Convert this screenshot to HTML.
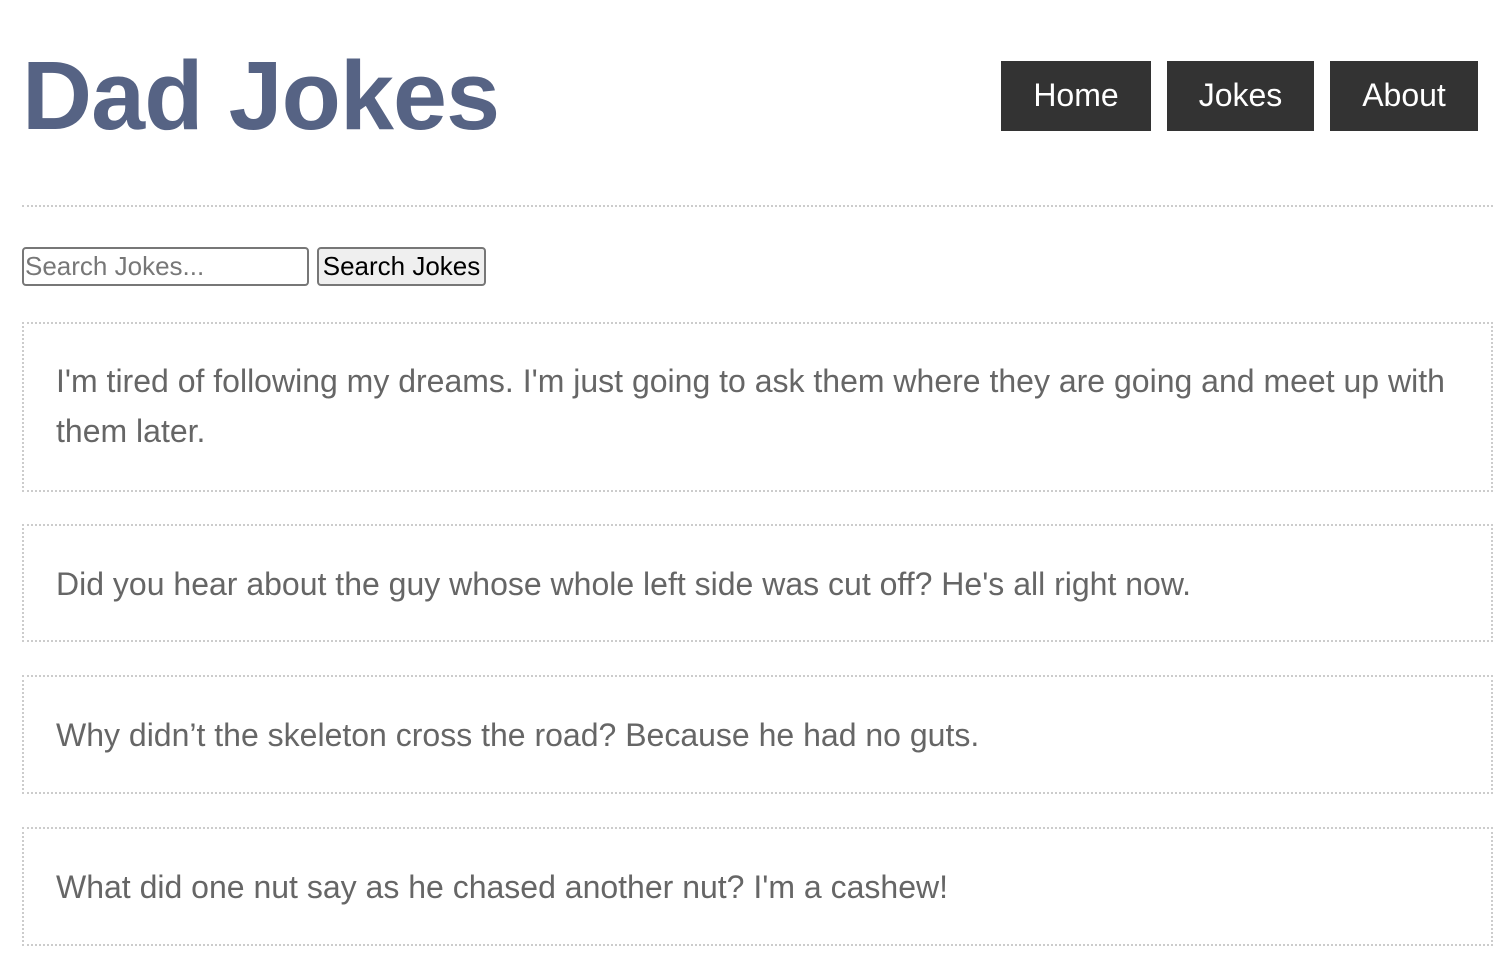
<!DOCTYPE html>
<html><head><style>
body{margin:0;background:#fff;font-family:"Liberation Sans",Arial,sans-serif;width:1500px;height:963px;overflow:hidden;position:relative}
h1{position:absolute;left:22px;top:46px;margin:0;font-size:97px;line-height:100px;color:#566384;font-weight:bold;letter-spacing:-0.9px}
.nav a{position:absolute;top:61px;height:70px;background:#333;color:#fff;font-size:32px;line-height:68px;text-align:center;text-decoration:none}
hr{position:absolute;left:22px;top:205px;width:1471px;margin:0;border:0;border-top:2px dotted #ccc}
.in{position:absolute;left:22px;top:247px;height:35px;border:2px solid #777;border-radius:4px;font-size:26px;line-height:35px;color:#777;box-sizing:content-box;padding-left:1px;width:282px}
.bt{position:absolute;left:317px;top:247px;width:165px;height:35px;border:2px solid #777;border-radius:4px;background:#efefef;font-size:26px;line-height:35px;color:#000;text-align:center}
.j{position:absolute;left:22px;width:1471px;border:2px dotted #ccc;color:#666;font-size:32px;line-height:50px;padding:0 32px;box-sizing:border-box}
</style></head><body>
<h1>Dad Jokes</h1>
<div class="nav">
<a style="left:1001px;width:150px">Home</a>
<a style="left:1167px;width:147px">Jokes</a>
<a style="left:1330px;width:148px">About</a>
</div>
<hr>
<div class="in">Search Jokes...</div>
<div class="bt">Search Jokes</div>
<div class="j" style="top:322px;height:170px;padding-top:32px">I'm tired of following my dreams. I'm just going to ask them where they are going and meet up with them later.</div>
<div class="j" style="top:524px;height:118px;padding-top:33px">Did you hear about the guy whose whole left side was cut off? He's all right now.</div>
<div class="j" style="top:675px;height:119px;padding-top:33px">Why didn’t the skeleton cross the road? Because he had no guts.</div>
<div class="j" style="top:827px;height:119px;padding-top:33px">What did one nut say as he chased another nut? I'm a cashew!</div>
</body></html>
